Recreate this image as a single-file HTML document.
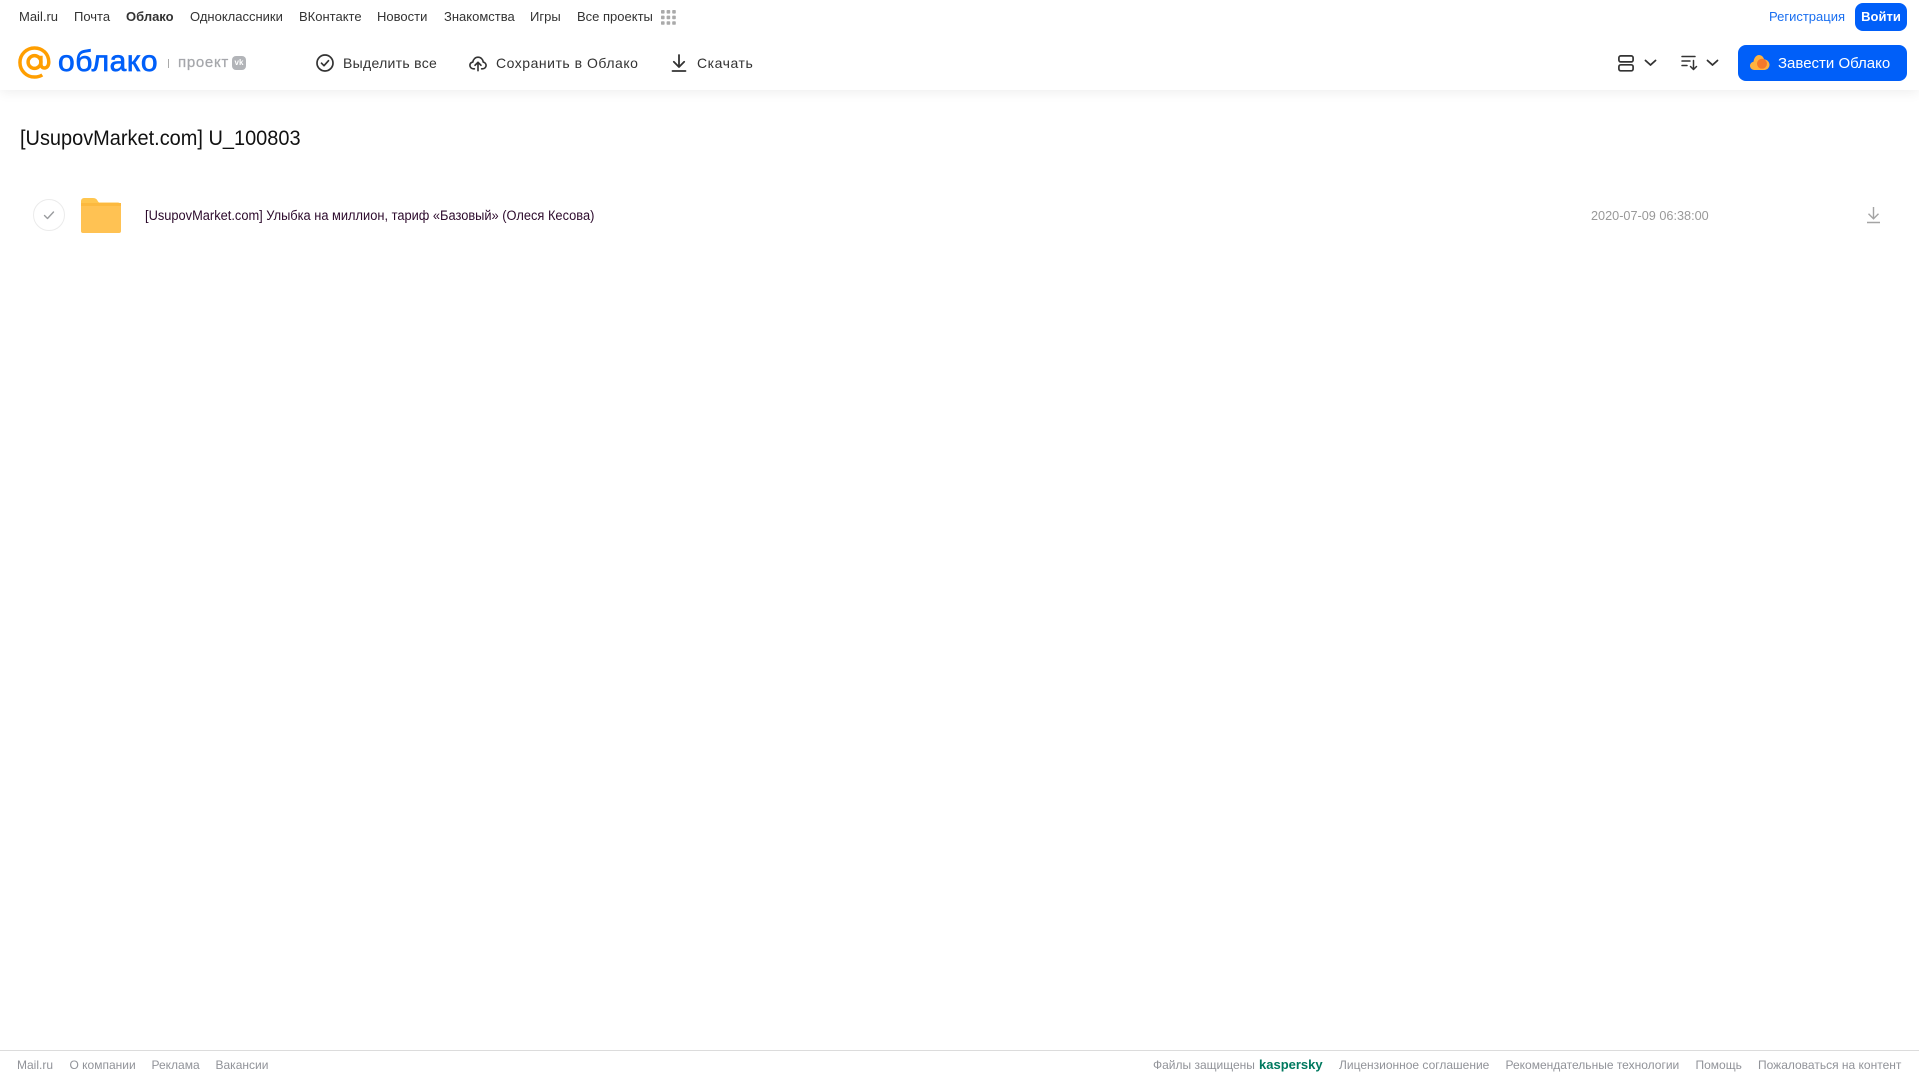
<!DOCTYPE html>
<html lang="ru"><head><meta charset="utf-8"><title>Облако</title>
<style>
html,body{margin:0;padding:0;background:#fff;width:1919px;height:1079px;overflow:hidden}
body{position:relative;font-family:"Liberation Sans",sans-serif}
.t{position:absolute;white-space:nowrap;line-height:20px;height:20px;transform-origin:0 50%}
.n{top:7px;font-size:13px;color:#333}
.a{top:53px;font-size:14px;color:#333}
.f{top:1055px;font-size:12px;color:#919399}
svg{position:absolute;overflow:visible}
</style></head><body>
<div style="position:absolute;left:0;top:0;width:1919px;height:90px;background:#fff;box-shadow:0 2px 12px rgba(0,0,0,.07)"></div>

<span class="t n" style="left:19px">Mail.ru</span>
<span class="t n" style="left:74px">Почта</span>
<span class="t n" style="left:126px;font-weight:bold">Облако</span>
<span class="t n" style="left:190px">Одноклассники</span>
<span class="t n" style="left:299px">ВКонтакте</span>
<span class="t n" style="left:377px">Новости</span>
<span class="t n" style="left:444px">Знакомства</span>
<span class="t n" style="left:530px">Игры</span>
<span class="t n" style="left:577px">Все проекты</span>
<svg style="left:661px;top:10px" width="15" height="15" fill="#aaa"><rect x="0" y="0" width="3.6" height="3.6" rx=".8"/><rect x="5.6" y="0" width="3.6" height="3.6" rx=".8"/><rect x="11.2" y="0" width="3.6" height="3.6" rx=".8"/><rect x="0" y="5.6" width="3.6" height="3.6" rx=".8"/><rect x="5.6" y="5.6" width="3.6" height="3.6" rx=".8"/><rect x="11.2" y="5.6" width="3.6" height="3.6" rx=".8"/><rect x="0" y="11.2" width="3.6" height="3.6" rx=".8"/><rect x="5.6" y="11.2" width="3.6" height="3.6" rx=".8"/><rect x="11.2" y="11.2" width="3.6" height="3.6" rx=".8"/></svg>

<span class="t" style="left:1769px;top:7px;font-size:13px;color:#1a6ff0">Регистрация</span>
<div style="position:absolute;left:1855px;top:3px;width:52px;height:28px;border-radius:8px;background:#005ff9;color:#fff;font-size:13px;font-weight:bold;line-height:28px;text-align:center">Войти</div>

<svg style="left:18px;top:46px" width="33" height="33" viewBox="0 0 34 34" fill="none" stroke="#ff9e00" stroke-width="3.6"><circle cx="17" cy="16.5" r="6.6"/><path d="M23.6 10v8.5c0 2.6 1.6 4.2 3.7 4.2 2.4 0 4.4-2.2 4.4-6.2C31.700 8 25.200 2 17 2 8.700 2 2 8.700 2 17s6.700 15 15 15c3 0 5.600-.7 8-2.200"/></svg>
<span class="t" style="left:58px;top:47px;height:30px;line-height:30px;font-size:30px;color:#005ff9;-webkit-text-stroke:.7px #005ff9;letter-spacing:.55px">облако</span>
<div style="position:absolute;left:168px;top:59px;width:1px;height:9px;background:#aaa"></div>
<span class="t" style="left:178px;top:53px;font-size:15px;color:#a5a7ab;-webkit-text-stroke:.25px #a5a7ab;letter-spacing:.7px">проект</span>
<div style="position:absolute;left:232px;top:56px;width:14px;height:14px;border-radius:4px;background:#b2b4b8"></div>
<span class="t" style="left:233px;top:53px;width:12px;text-align:center;font-size:8px;font-weight:bold;color:#fff">vk</span>

<svg style="left:315px;top:53px" width="20" height="20" fill="none" stroke="#333" stroke-width="1.700" stroke-linecap="round" stroke-linejoin="round"><circle cx="10" cy="10" r="8"/><path d="M6.500 10.200l2.500 2.500 4.500-5"/></svg>
<span class="t a" style="left:343px;top:53px;letter-spacing:.3px">Выделить все</span>
<svg style="left:469px;top:54px" width="18" height="18" viewBox="0 0 20 20" fill="none" stroke="#333" stroke-width="1.800" stroke-linecap="round" stroke-linejoin="round"><path d="M6 16.500H5c-2.200 0-4-1.700-4-3.800 0-1.900 1.300-3.300 3.200-3.700C4.700 5.800 7.100 3.500 10 3.500c3 0 5.500 2.400 5.800 5.500 1.800.4 3.200 1.900 3.200 3.700 0 2.100-1.800 3.800-4 3.800h-1"/><path d="M10 18.500v-9M6.700 12.500L10 9.200l3.300 3.300"/></svg>
<span class="t a" style="left:496px;top:53px;letter-spacing:.52px">Сохранить в Облако</span>
<svg style="left:670px;top:53px" width="18" height="20" fill="none" stroke="#333" stroke-width="1.800" stroke-linecap="round" stroke-linejoin="round"><path d="M9 2v11.500M3.800 8.800L9 14l5.200-5.200M2.500 18h13"/></svg>
<span class="t a" style="left:697px;top:53px;letter-spacing:.55px">Скачать</span>

<svg style="left:1618px;top:55px" width="16" height="17" fill="none" stroke="#333" stroke-width="1.700"><rect x=".9" y=".9" width="14.200" height="6" rx="1.800"/><rect x=".9" y="9.800" width="14.200" height="6" rx="1.800"/></svg>
<svg style="left:1644px;top:59px" width="13" height="8" fill="none" stroke="#333" stroke-width="1.800" stroke-linecap="round" stroke-linejoin="round"><path d="M1.500 1.500L6.500 6l5-4.500"/></svg>
<svg style="left:1681px;top:55px" width="18" height="16" fill="none" stroke="#333" stroke-width="1.500" stroke-linecap="round" stroke-linejoin="round"><path d="M1 1.500h13M1 6h8M1 10.500h5M12.500 5.500v9M9.500 11.500l3 3 3-3"/></svg>
<svg style="left:1706px;top:59px" width="13" height="8" fill="none" stroke="#333" stroke-width="1.800" stroke-linecap="round" stroke-linejoin="round"><path d="M1.500 1.500L6.500 6l5-4.500"/></svg>

<div style="position:absolute;left:1738px;top:45px;width:169px;height:36px;border-radius:8px;background:#005ff9"></div>
<svg style="left:1750px;top:54px" width="20" height="17"><path d="M4.500 16C2 16 0 14.200 0 11.800 0 9.700 1.500 8.100 3.500 7.700 4 3.700 6.300 1 9 1c2.500 0 4.500 1.900 5 4.300 3 .3 5.500 2.600 5.500 5.500 0 2.900-2.300 5.200-5.300 5.200z" fill="#ffb23e"/><circle cx="12" cy="9.800" r="5" fill="#f5792a"/></svg>
<span class="t" style="left:1778px;top:54px;font-size:15px;color:#fff">Завести Облако</span>

<span class="t" style="left:20px;top:126px;height:26px;line-height:26px;font-size:21px;color:#111;transform:scaleX(.95)">[UsupovMarket.com] U_100803</span>

<svg style="left:33px;top:199px" width="32" height="32" fill="none"><circle cx="16" cy="16" r="15.500" stroke="#ebebeb"/><path d="M11.500 16.500l3 3 6-6.500" stroke="#9a9c9f" stroke-width="1.400" stroke-linecap="round" stroke-linejoin="round"/></svg>
<svg style="left:81px;top:198px" width="40" height="35"><path d="M0 3a3 3 0 0 1 3-3h9c3 0 4 1.500 5 3.500l1 1h19a3 3 0 0 1 3 3V32a3 3 0 0 1-3 3H3a3 3 0 0 1-3-3z" fill="#ffc64f"/><rect y="7" width="40" height="28" rx="2" fill="#ffc253"/><rect y="5" width="40" height="3" fill="#fcb93f"/></svg>
<span class="t" style="left:144.500px;top:206px;font-size:13.500px;color:#2c0a2c;transform:scaleX(.951)">[UsupovMarket.com] Улыбка на миллион, тариф «Базовый» (Олеся Кесова)</span>
<span class="t" style="left:1591px;top:206px;font-size:13px;color:#999;transform:scaleX(.975)">2020-07-09 06:38:00</span>
<svg style="left:1866px;top:206px" width="15" height="18" fill="none" stroke="#a4a4a4" stroke-width="1.400"><path d="M7.500 1v11.500M2.500 7.800l5 5 5-5M1 16.500h13"/></svg>

<div style="position:absolute;left:0;top:1050px;width:1919px;height:1px;background:#dcdcdc"></div>
<span class="t f" style="left:17px">Mail.ru</span>
<span class="t f" style="left:69.500px">О компании</span>
<span class="t f" style="left:151.500px">Реклама</span>
<span class="t f" style="left:215.500px">Вакансии</span>
<span class="t f" style="left:1153px">Файлы защищены</span>
<span class="t" style="left:1259px;top:1055px;font-size:13px;font-weight:bold;color:#00795f">kaspersky</span>
<span class="t f" style="left:1339px">Лицензионное соглашение</span>
<span class="t f" style="left:1505.500px">Рекомендательные технологии</span>
<span class="t f" style="left:1695.500px">Помощь</span>
<span class="t f" style="left:1758px">Пожаловаться на контент</span>
</body></html>
